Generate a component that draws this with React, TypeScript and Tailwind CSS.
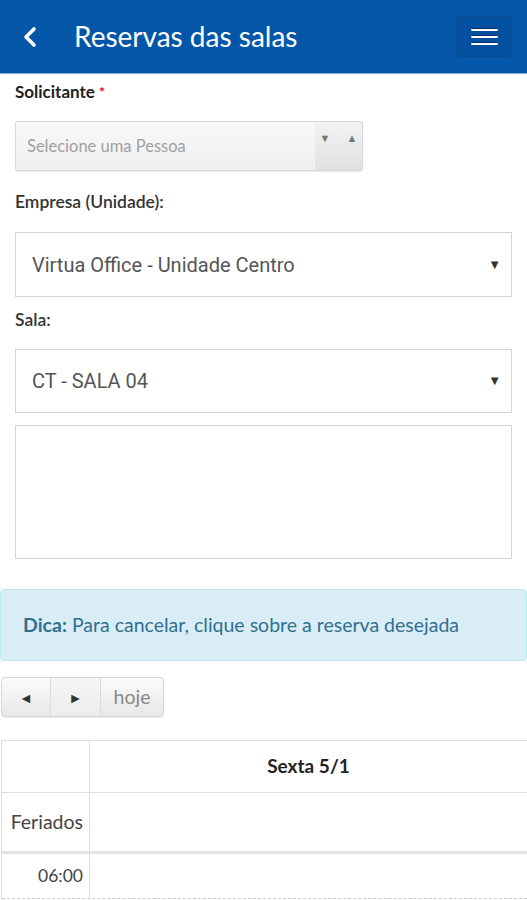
import React from "react";

export default function App() {
  return (
    <div className="w-[527px] h-[900px] overflow-hidden bg-white" style={{ fontFamily: "Lato, 'Open Sans', sans-serif" }}>
      {/* Header */}
      <div className="h-[74px] bg-[#0457a8] border-b border-[#7fa9d6] flex items-center relative">
        <div className="w-[74px] flex items-center pl-[22px]">
          <svg width="16" height="24" viewBox="0 0 16 24">
            <path d="M12 4 L4 12 L12 20" stroke="white" strokeWidth="3.6" fill="none" strokeLinecap="round" strokeLinejoin="round" />
          </svg>
        </div>
        <div className="text-white text-[28px] leading-none pb-[2px]">Reservas das salas</div>
        <div className="ml-auto mr-[15px] w-[56px] h-[41px] rounded-[4px] border border-[#0a4a8e] bg-[#0350a0] flex flex-col items-center justify-center gap-[4px]">
          <div className="w-[27px] h-[3px] bg-white rounded-sm border-t border-[#0a2d6e]" />
          <div className="w-[27px] h-[3px] bg-white rounded-sm border-t border-[#0a2d6e]" />
          <div className="w-[27px] h-[3px] bg-white rounded-sm border-t border-[#0a2d6e]" />
        </div>
      </div>

      {/* Form */}
      <div className="px-[15px]">
        <div className="pt-[8px] text-[17px] font-bold text-[#222] leading-[20px]">
          Solicitante <span className="text-[#e00] text-[14px] align-top">*</span>
        </div>
        <div className="mt-[19px] w-[348px] h-[50px] border border-[#d8d8d8] rounded-[2px] flex bg-gradient-to-b from-[#f7f7f7] to-[#ececec] shadow-[0_1px_1px_rgba(0,0,0,0.08)]">
          <div className="flex-1 flex items-center pl-[11px] text-[16.5px] text-[#a0a0a0] border-r border-[#f4f4f4] bg-gradient-to-b from-[#f9f9f9] to-[#efefef]">Selecione uma Pessoa</div>
          <div className="w-[47px] flex items-start justify-center gap-[16px] pt-[10px] bg-gradient-to-b from-[#f2f2f2] to-[#e2e2e2]">
            <span className="text-[11px] text-[#777] leading-none">▼</span>
            <span className="text-[11px] text-[#777] leading-none">▲</span>
          </div>
        </div>

        <div className="mt-[21px] text-[17.5px] font-semibold text-[#333] leading-[20px]">Empresa (Unidade):</div>
        <div className="mt-[20px] h-[65px] border border-[#d4d4d4] flex items-center pl-[16px] pr-[10px] text-[20px] text-[#555]" style={{ fontFamily: "Roboto, sans-serif" }}>
          <span className="flex-1">Virtua Office - Unidade Centro</span>
          <span className="text-[13px] text-[#333]">▼</span>
        </div>

        <div className="mt-[13px] text-[17.5px] font-semibold text-[#333] leading-[20px]">Sala:</div>
        <div className="mt-[19px] h-[64px] border border-[#d4d4d4] flex items-center pl-[16px] pr-[10px] text-[20px] text-[#555]" style={{ fontFamily: "Roboto, sans-serif" }}>
          <span className="flex-1">CT - SALA 04</span>
          <span className="text-[13px] text-[#333]">▼</span>
        </div>

        <div className="mt-[12px] h-[134px] border border-[#d4d4d4]" />
      </div>

      {/* Alert */}
      <div className="mt-[30px] h-[72px] bg-[#d9edf7] border border-[#bce8f1] rounded-[4px] flex items-center pl-[22px] text-[19.5px] text-[#31708f]">
        <span className="font-bold mr-[5px]">Dica:</span>Para cancelar, clique sobre a reserva desejada
      </div>

      {/* Buttons */}
      <div className="mt-[16px] ml-[1px] flex h-[40px] w-[163px] rounded-[4px] border border-[#d6d6d6] overflow-hidden bg-gradient-to-b from-[#fbfbfb] to-[#e8e8e8] shadow-[0_1px_1px_rgba(0,0,0,0.08)]">
        <div className="w-[49px] flex items-center justify-center text-[14px] text-[#333] border-r border-[#dcdcdc]">◄</div>
        <div className="w-[50px] flex items-center justify-center text-[14px] text-[#333] border-r border-[#dcdcdc] bg-gradient-to-b from-[#f6f6f6] to-[#ececec]">►</div>
        <div className="flex-1 flex items-center justify-center text-[19.5px] text-[#888]">hoje</div>
      </div>

      {/* Calendar */}
      <div className="mt-[23px] ml-[1px] border-l border-t border-[#ddd] text-[17px] text-[#333]">
        <div className="flex h-[52px] border-b border-[#ddd]">
          <div className="w-[88px] border-r border-[#ddd]" />
          <div className="flex-1 flex items-center justify-center font-bold text-[19px] text-[#222]">Sexta 5/1</div>
        </div>
        <div className="flex h-[61px] border-b-[3px] border-[#e2e2e2]">
          <div className="w-[88px] border-r border-[#ddd] flex items-center justify-end pr-[6px] text-[19.5px] text-[#444]">Feriados</div>
          <div className="flex-1" />
        </div>
        <div className="flex h-[45px] border-b border-dashed border-[#ccc]">
          <div className="w-[88px] border-r border-[#ddd] flex items-center justify-end pr-[6px] text-[17.5px] text-[#444]">06:00</div>
          <div className="flex-1" />
        </div>
      </div>
    </div>
  );
}
